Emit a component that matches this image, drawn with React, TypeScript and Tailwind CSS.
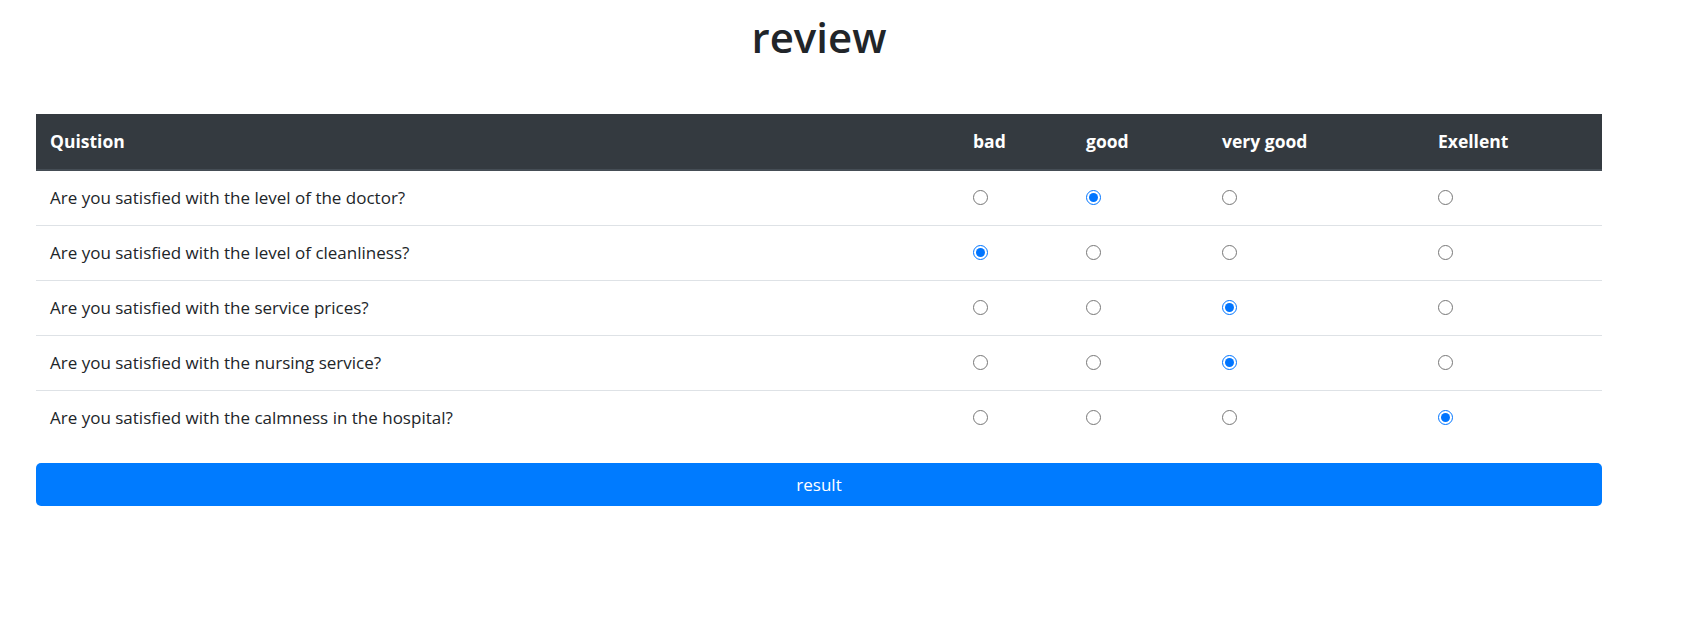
import React from "react";

const levels = ["bad", "good", "very good", "Exellent"];

const questions = [
  { text: "Are you satisfied with the level of the doctor?", picked: 1 },
  { text: "Are you satisfied with the level of cleanliness?", picked: 0 },
  { text: "Are you satisfied with the service prices?", picked: 2 },
  { text: "Are you satisfied with the nursing service?", picked: 2 },
  { text: "Are you satisfied with the calmness in the hospital?", picked: 3 },
];

export default function App() {
  return (
    <div className="min-h-screen bg-white font-['Open_Sans',sans-serif] text-[#212529]">
      <div className="ml-[36px] w-[1566px] pt-[10px]">
        <h1 className="text-center text-[42px] font-semibold leading-[54px]">
          review
        </h1>

        <table className="mt-[50px] w-full table-fixed border-collapse text-[17px]">
          <colgroup>
            <col className="w-[923px]" />
            <col className="w-[113px]" />
            <col className="w-[136px]" />
            <col className="w-[216px]" />
            <col className="w-[178px]" />
          </colgroup>
          <thead className="bg-[#343a40] text-white">
            <tr className="h-[56px] border-b-2 border-[#454d55] text-[17.5px]">
              <th className="pl-[14px] text-left font-bold">Quistion</th>
              {levels.map((l) => (
                <th key={l} className="pl-[14px] text-left font-bold">
                  {l}
                </th>
              ))}
            </tr>
          </thead>
          <tbody>
            {questions.map((q, i) => (
              <tr
                key={q.text}
                className={`h-[55px] ${i > 0 ? "border-t border-[#dee2e6]" : ""}`}
              >
                <td className="pl-[14px] align-middle">{q.text}</td>
                {levels.map((l, j) => (
                  <td key={l} className="pl-[14px] align-middle">
                    <input
                      type="radio"
                      name={`q${i}`}
                      defaultChecked={q.picked === j}
                      className="m-0 block h-[15px] w-[15px] accent-[#0075ff]"
                    />
                  </td>
                ))}
              </tr>
            ))}
          </tbody>
        </table>

        <button className="mt-[18px] h-[43px] w-full rounded-[5px] bg-[#007bff] text-[17px] text-white">
          result
        </button>
      </div>
    </div>
  );
}
